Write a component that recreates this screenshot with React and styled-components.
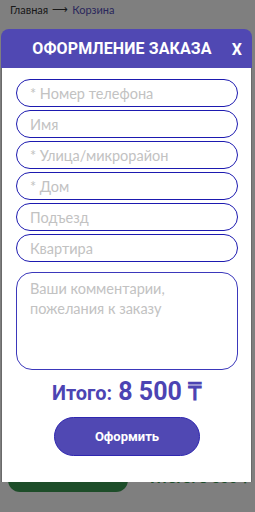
import React from "react";
import styled, { createGlobalStyle } from "styled-components";

const Global = createGlobalStyle`
  html, body { margin: 0; padding: 0; background: #ffffff; }
  body { font-family: "Roboto", "Liberation Sans", sans-serif; }
  * { box-sizing: border-box; }
`;

const Page = styled.div`
  position: relative;
  width: 255px;
  height: 512px;
  overflow: hidden;
  background: #ffffff;
  display: flex;
  flex-direction: column;
  justify-content: space-between;
`;

const Crumbs = styled.div`
  display: flex;
  align-items: center;
  gap: 4px;
  padding: 2px 10px 0;
  font-family: "Lato", "Liberation Sans", sans-serif;
  font-size: 11px;
  color: #333;
  height: 16px;
`;

const CrumbCurrent = styled.span`
  color: #554fb8;
`;

const BottomBar = styled.div`
  display: flex;
  align-items: flex-end;
  justify-content: space-between;
  padding: 0 6px 20px 8px;
  height: 60px;
`;

const GreenButton = styled.div`
  width: 120px;
  height: 30px;
  border-radius: 12px;
  background: #3a9a52;
`;

const GreenTotal = styled.div`
  font-size: 15px;
  font-weight: 700;
  color: #3a9a52;
  line-height: 15px;
  margin-bottom: 6px;
`;

const Overlay = styled.div`
  position: absolute;
  inset: 0;
  background: rgba(0, 0, 0, 0.5);
`;

const Modal = styled.div`
  position: absolute;
  left: 1px;
  top: 29px;
  width: 251px;
  height: 453px;
  display: flex;
  flex-direction: column;
`;

const Header = styled.div`
  position: relative;
  height: 39px;
  flex: 0 0 39px;
  background: #5048b3;
  border-radius: 8px 8px 0 0;
  display: flex;
  align-items: center;
  justify-content: center;
  padding-right: 9px;
`;

const Title = styled.div`
  color: #fff;
  font-weight: 700;
  font-size: 16px;
  letter-spacing: 0.1px;
`;

const Close = styled.div`
  position: absolute;
  right: 10px;
  top: 50%;
  transform: translateY(-50%);
  color: #fff;
  font-weight: 700;
  font-size: 16px;
`;

const Body = styled.div`
  flex: 1;
  background: #fff;
  border-left: 1px solid #6a6a6a;
  border-right: 1px solid #6a6a6a;
  padding: 11px 13px 0 14px;
  display: flex;
  flex-direction: column;
`;

const Fields = styled.div`
  display: flex;
  flex-direction: column;
  gap: 3px;
`;

const Field = styled.div`
  height: 28px;
  border: 1.5px solid #1d1ab0;
  border-radius: 14px;
  display: flex;
  align-items: center;
  padding: 0 13px;
  font-family: "Lato", "Noto Sans", sans-serif;
  font-size: 14.5px;
  color: #c2c2c2;
  white-space: nowrap;
`;

const Comment = styled.div`
  margin-top: 10px;
  height: 98px;
  border: 1.2px solid #3b38bb;
  border-radius: 16px;
  padding: 6px 13px;
  font-family: "Lato", "Noto Sans", sans-serif;
  font-size: 14.5px;
  line-height: 20px;
  color: #c2c2c2;
`;

const Total = styled.div`
  margin-top: 3px;
  display: flex;
  align-items: baseline;
  justify-content: center;
  gap: 6px;
  color: #4c44b3;
  font-weight: 700;
`;

const TotalLabel = styled.span`
  font-size: 20px;
`;

const TotalValue = styled.span`
  font-size: 25px;
`;

const Submit = styled.div`
  align-self: center;
  margin-top: 10px;
  width: 146px;
  height: 39px;
  border-radius: 20px;
  background: #5048b3;
  border: 1px solid #2f27b0;
  color: #fff;
  font-weight: 700;
  font-size: 13px;
  display: flex;
  align-items: center;
  justify-content: center;
`;

const fields = [
  "* Номер телефона",
  "Имя",
  "* Улица/микрорайон",
  "* Дом",
  "Подъезд",
  "Квартира",
];

export default function App() {
  return (
    <>
      <Global />
      <Page>
        <Crumbs>
          <span>Главная</span>
          <span>⟶</span>
          <CrumbCurrent>Корзина</CrumbCurrent>
        </Crumbs>
        <BottomBar>
          <GreenButton />
          <GreenTotal>Итого: 8 500 ₸</GreenTotal>
        </BottomBar>
        <Overlay />
        <Modal>
          <Header>
            <Title>ОФОРМЛЕНИЕ ЗАКАЗА</Title>
            <Close>X</Close>
          </Header>
          <Body>
            <Fields>
              {fields.map((f) => (
                <Field key={f}>{f}</Field>
              ))}
            </Fields>
            <Comment>
              Ваши комментарии,
              <br />
              пожелания к заказу
            </Comment>
            <Total>
              <TotalLabel>Итого:</TotalLabel>
              <TotalValue>8 500 ₸</TotalValue>
            </Total>
            <Submit>Оформить</Submit>
          </Body>
        </Modal>
      </Page>
    </>
  );
}
